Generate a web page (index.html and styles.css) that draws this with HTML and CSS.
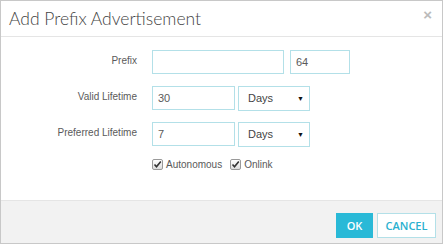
FILE: index.html
```html
<!DOCTYPE html>
<html lang="en">
<head>
  <meta charset="UTF-8" />
  <title>Add Prefix Advertisement</title>
  <link rel="stylesheet" href="styles.css">
</head>
<body>
  <div class="modal">
    <div class="modal-header">
      <h2 class="modal-title">Add Prefix Advertisement</h2>
      <span class="close">&times;</span>
    </div>
    <div class="modal-body">
      <div class="form-row">
        <label class="row-label">Prefix</label>
        <input class="field field-prefix" type="text" value="" />
        <input class="field field-len" type="text" value="64" />
      </div>
      <div class="form-row">
        <label class="row-label">Valid Lifetime</label>
        <input class="field field-num" type="text" value="30" />
        <div class="select-box"><span>Days</span><span class="caret">&#9660;</span></div>
      </div>
      <div class="form-row">
        <label class="row-label">Preferred Lifetime</label>
        <input class="field field-num" type="text" value="7" />
        <div class="select-box"><span>Days</span><span class="caret">&#9660;</span></div>
      </div>
      <div class="form-row checks">
        <span class="row-label"></span>
        <label class="check"><span class="box"><svg width="9" height="9" viewBox="0 0 9 9"><path d="M1.5 4.5 L3.5 6.8 L7.8 1.5" fill="none" stroke="#333" stroke-width="1.6"/></svg></span>Autonomous</label>
        <label class="check"><span class="box"><svg width="9" height="9" viewBox="0 0 9 9"><path d="M1.5 4.5 L3.5 6.8 L7.8 1.5" fill="none" stroke="#333" stroke-width="1.6"/></svg></span>Onlink</label>
      </div>
    </div>
    <div class="modal-footer">
      <button class="btn btn-ok">OK</button>
      <button class="btn btn-cancel">CANCEL</button>
    </div>
  </div>
</body>
</html>
```

FILE: styles.css
```css
body {
  margin: 0;
  font-family: "Liberation Sans", Arial, sans-serif;
  background-color: #fff;
}
.modal {
  width: 443px;
  height: 244px;
  box-sizing: border-box;
  border: 1px solid #c8c8c8;
  display: flex;
  flex-direction: column;
}
.modal-header {
  height: 35px;
  border-bottom: 1px solid #e5e5e5;
  display: flex;
  align-items: center;
  justify-content: space-between;
  padding: 0 10px 0 8px;
}
.modal-title {
  margin: 0;
  font-family: Lato, sans-serif;
  font-weight: 300;
  font-size: 17.5px;
  color: #444;
}
.close {
  color: #bbb;
  font-size: 15px;
  font-weight: bold;
  margin-top: -8px;
}
.modal-body {
  flex: 1;
  padding-top: 13px;
}
.form-row {
  display: flex;
  align-items: center;
  gap: 3px;
  margin-bottom: 12px;
  height: 24px;
}
.row-label {
  width: 136px;
  margin-right: 12px;
  text-align: right;
  font-size: 10px;
  color: #5a5a5a;
  padding-bottom: 3px;
}
.field {
  height: 24px;
  box-sizing: border-box;
  border: 1px solid #b3e0e8;
  padding: 0 5px;
  font-family: "Liberation Sans", Arial, sans-serif;
  font-size: 11px;
  color: #5a5a5a;
  outline: none;
}
.field-prefix {
  width: 132px;
  margin-right: 3px;
}
.field-len {
  width: 60px;
}
.field-num {
  width: 83px;
}
.select-box {
  width: 72px;
  height: 25px;
  box-sizing: border-box;
  border: 1px solid #b3e0e8;
  display: flex;
  align-items: center;
  justify-content: space-between;
  padding: 0 5px 0 9px;
  font-size: 11px;
  color: #444;
}
.caret {
  font-size: 7px;
  color: #111;
}
.checks {
  height: 12px;
  margin-top: 3px;
}
.check {
  display: flex;
  align-items: center;
  font-size: 10px;
  color: #5a5a5a;
  margin-right: 5px;
}
.box {
  width: 9px;
  height: 9px;
  border: 1px solid #999;
  border-radius: 2px;
  background: linear-gradient(#fff, #ddd);
  margin-right: 3px;
  display: flex;
}
.modal-footer {
  height: 43px;
  border-top: 1px solid #e5e5e5;
  background-color: #f2f2f2;
  display: flex;
  justify-content: flex-end;
  align-items: flex-start;
  gap: 4px;
  padding: 12px 6px 0 0;
  box-sizing: border-box;
}
.btn {
  height: 25px;
  font-family: "Open Sans", sans-serif;
  font-size: 11px;
  font-weight: 600;
  cursor: pointer;
}
.btn-ok {
  width: 37px;
  background-color: #29b9d7;
  color: #fff;
  border: none;
}
.btn-cancel {
  width: 59px;
  background-color: #fff;
  color: #29b0cf;
  border: 1px solid #b3e0e8;
}
```
